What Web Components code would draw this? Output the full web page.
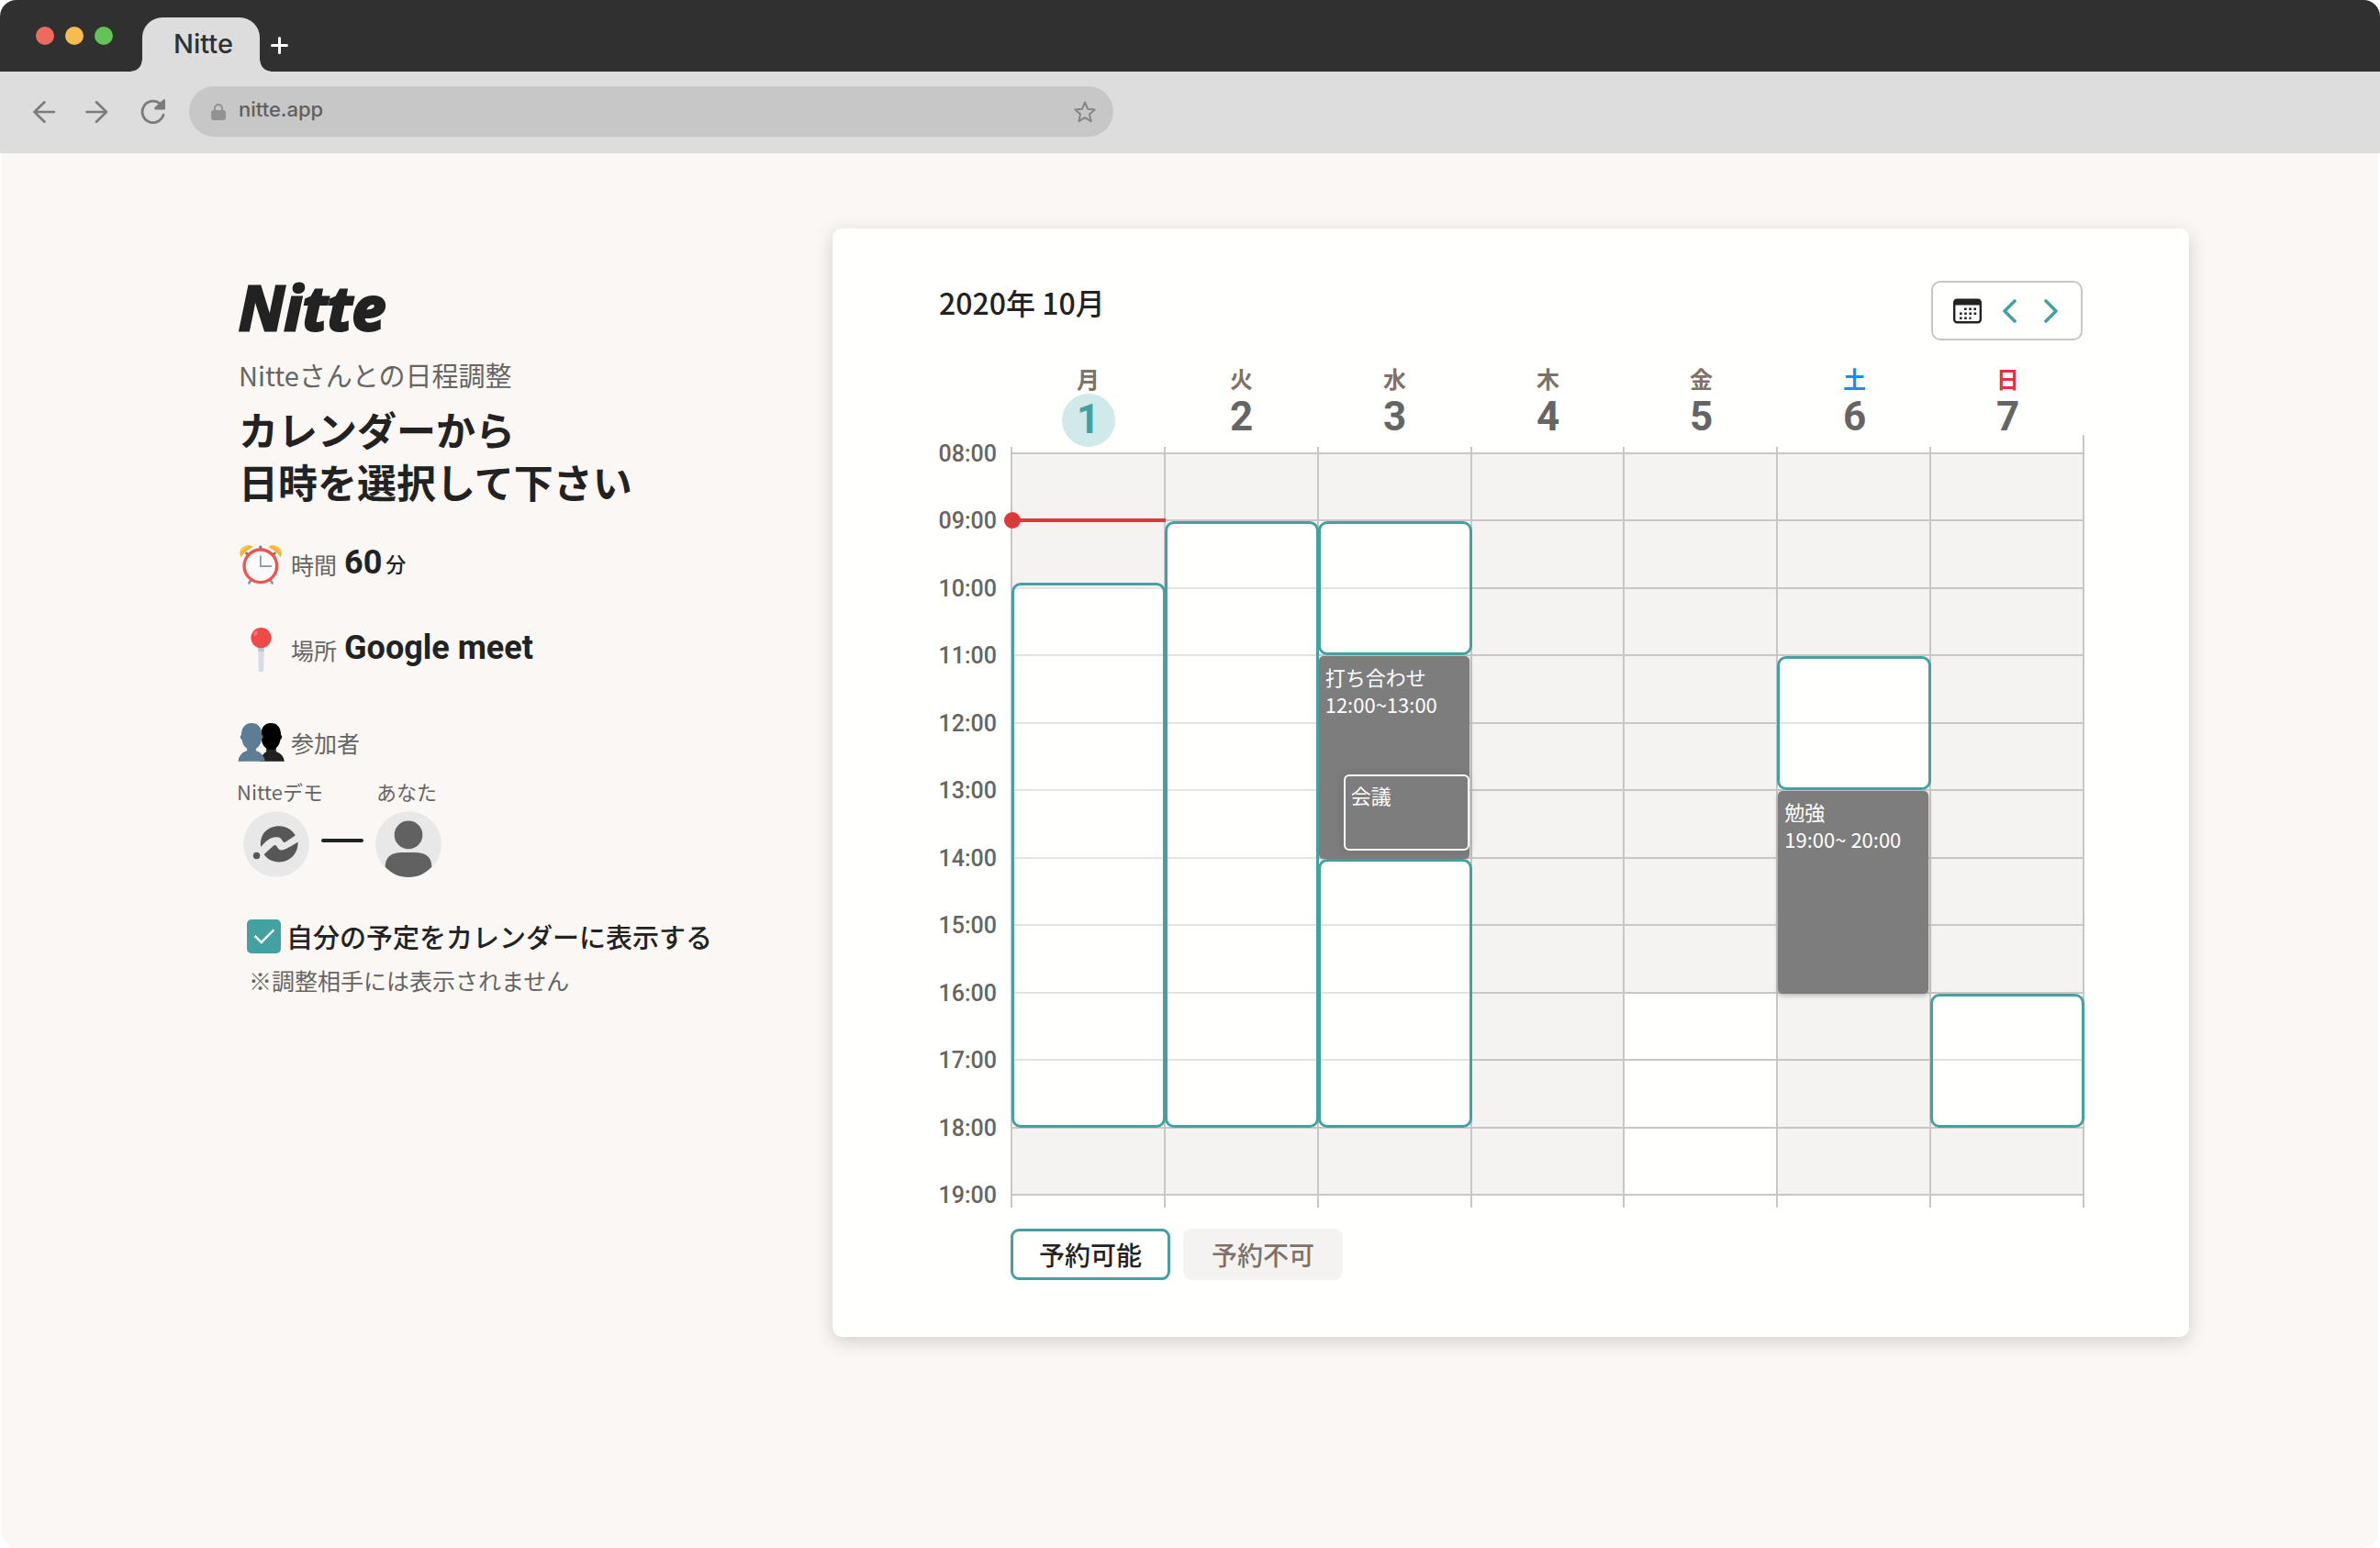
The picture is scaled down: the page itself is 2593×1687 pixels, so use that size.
<!DOCTYPE html>
<html lang="ja">
<head>
<meta charset="utf-8">
<title>Nitte</title>
<style>
  body {
    margin: 0;
    background: #fff;
    color: #222;
    font-family: "Noto Sans CJK JP", "Noto Sans", sans-serif;
    --teal: #44a1a1;
    --rule: #c9c7c6;
    --muted: #666563;
    --closed: #f4f3f2;
    --paper: #fffffd;
    --latin: Roboto, "Noto Sans CJK JP", sans-serif;
  }
</style>
</head>
<body>
<browser-window>
  <booking-page></booking-page>
</browser-window>

<script>
const define = (name, html, setup) => {
  const template = document.createElement('template');
  template.innerHTML = html;
  customElements.define(name, class extends HTMLElement {
    constructor() {
      super();
      this.attachShadow({ mode: 'open' }).append(template.content.cloneNode(true));
    }
    connectedCallback() {
      if (setup) setup(this, this.shadowRoot);
    }
  });
};

define('browser-window', `
  <style>
    :host { display: flex; flex-direction: column; min-height: 100vh; }
    * { box-sizing: border-box; }
    button { appearance: none; border: 0; padding: 0; background: none; font: inherit; color: inherit; display: flex; }
    .tabs { display: flex; align-items: flex-end; height: 78px; padding-left: 39px; background: #303030; border-radius: 18px 18px 0 0; }
    .lights { display: flex; gap: 12px; align-self: center; width: 116px; }
    .lights i { width: 20px; height: 20px; border-radius: 50%; }
    .tab { position: relative; width: 128px; height: 59px; padding: 0 0 2px 34px; align-items: center; background: #ddd; color: #303030;
      border-radius: 22px 22px 0 0; font: 500 29px/40px Inter, sans-serif; }
    .tab::before, .tab::after { content: ""; position: absolute; bottom: 0; width: 12px; height: 12px; }
    .tab::before { right: 100%; background: radial-gradient(circle at 0 0, transparent 11px, #ddd 12px); }
    .tab::after { left: 100%; background: radial-gradient(circle at 100% 0, transparent 11px, #ddd 12px); }
    .add { align-self: center; margin: 20px 0 0 12px; }
    .add svg { display: block; }
    .tools { display: flex; align-items: center; height: 89px; padding: 0 36px 2px; background: #ddd; }
    .nav { display: flex; gap: 32px; width: 170px; align-items: center; }
    .nav button:last-child { margin-left: 3px; }
    .url { display: flex; align-items: center; width: 1007px; height: 55px; padding: 0 19px 0 24px; border-radius: 28px; background: #c7c7c7; }
    input { flex: 1; min-width: 0; margin: 0; padding: 0 0 5px 14px; border: 0; outline: 0; background: none; color: #606060; font: 500 22px/32px Inter, sans-serif; }
    main { flex: 1; margin: 0 2px; background: #fbf7f4; border-radius: 0 0 18px 18px; }
  </style>
  <header>
    <div class="tabs">
      <div class="lights"><i style="background:#ee6a5f"></i><i style="background:#f5bd4f"></i><i style="background:#61c454"></i></div>
      <button class="tab">Nitte</button>
      <button class="add" aria-label="新しいタブ"><svg width="19" height="19" viewBox="0 0 19 19" stroke="#fff" stroke-width="3" stroke-linecap="round"><path d="M9.500 1.500v16M1.500 9.500h16"/></svg></button>
    </div>
    <div class="tools">
      <div class="nav">
        <button aria-label="戻る"><svg width="25" height="24" viewBox="0 0 25 24" fill="none" stroke="#7b7b7b" stroke-width="2.600" stroke-linecap="round" stroke-linejoin="round"><path d="M23 12H1.500M12.500 1.300L1.500 12l11 10.700"/></svg></button>
        <button aria-label="進む"><svg width="25" height="24" viewBox="0 0 25 24" fill="none" stroke="#7b7b7b" stroke-width="2.600" stroke-linecap="round" stroke-linejoin="round"><path d="M1.500 12H23M12 1.300L23 12 12 22.700"/></svg></button>
        <button aria-label="再読み込み"><svg width="28" height="27" viewBox="0 0 28 27" fill="none"><path d="M20.500 4.300A11.700 11.700 0 1 0 25 17.200" stroke="#7b7b7b" stroke-width="2.800" stroke-linecap="round"/><path d="M25 .6L16 8.600c-1.500 1.600-.8 3 1 3h8.500c1 0 1.500-.5 1.500-1.500V1.300C27 0 26-.2 25 .6z" fill="#7b7b7b"/></svg></button>
      </div>
      <div class="url">
        <svg width="16" height="18" viewBox="0 0 16 18"><rect y="7" width="16" height="11" rx="3" fill="#929292"/><path d="M4 8V5a4 4 0 0 1 8 0v3" fill="none" stroke="#929292" stroke-width="2"/></svg>
        <input type="text" value="nitte.app" aria-label="アドレス">
        <button aria-label="ブックマーク"><svg width="24" height="24" viewBox="0 0 24 24" fill="none" stroke="#858585" stroke-width="2" stroke-linejoin="round"><path d="M12 1.500l3 7.200 7.700.7-5.800 5 1.800 7.800L12 18.200l-6.700 4 1.800-7.800-5.800-5 7.700-.7z"/></svg></button>
      </div>
    </div>
  </header>
  <main><slot></slot></main>
`);

define('booking-page', `
  <style>
    :host { display: grid; grid-template-columns: 650px minmax(0, 1fr); align-items: start; padding: 82px 206px 0 255px; }
  </style>
  <booking-summary></booking-summary>
  <week-calendar></week-calendar>
`);

define('booking-summary', `
  <style>
    :host { display: block; padding-top: 52px; }
    .logo { margin: 0 0 0 3px; font: italic 700 66px/66px "Open Sans", sans-serif; -webkit-text-stroke: 3px #222; paint-order: stroke; stroke-linejoin: round; }
    .sub { margin: 21px 0 11px 3px; font-size: 29px; line-height: 40px; color: var(--muted); }
    h1 { margin: 0 0 37px 3px; font-weight: 700; font-size: 43px; line-height: 57px; }
    .people { display: flex; align-items: flex-end; margin-top: 14px; }
    .link { width: 46px; height: 4px; margin: 0 13px 38px; border-radius: 2px; background: #222; }
    label { display: flex; align-items: center; gap: 6px; margin: 46px 0 0 12px; font-weight: 500; font-size: 29px; line-height: 37px; }
    input { appearance: none; display: grid; place-items: center; width: 37px; height: 37px; margin: 0; border-radius: 5px; background: var(--teal); }
    input::before { content: ""; width: 9px; height: 18px; margin-top: -6px; border: solid #fff; border-width: 0 3px 3px 0; border-radius: 1px; transform: rotate(45deg); }
    .note { margin: 14px 0 0 14px; font-size: 25px; line-height: 30px; color: var(--muted); }
    .gap-m { margin-top: 43px; }
    .gap-l { margin-top: 51px; }
  </style>
  <p class="logo">Nitte</p>
  <p class="sub">Nitteさんとの日程調整</p>
  <h1>カレンダーから<br>日時を選択して下さい</h1>
  <info-row label="時間">
    <svg slot="icon" width="46" height="43" viewBox="65 68 137 128">
      <path d="M103 180l-7 11M164 180l7 11" stroke="#7d97a5" stroke-width="8" stroke-linecap="round"/>
      <path d="M88 95l10 8M179 95l-10 8M133 74v10" stroke="#5d7c8c" stroke-width="9" stroke-linecap="round"/>
      <path d="M69 108Q60 86 77 74 94 63 108 75 83 88 69 108z" fill="#fbb330"/>
      <path d="M198 108Q207 86 190 74 173 63 159 75 184 88 198 108z" fill="#fbb330"/>
      <path d="M71 90q5-14 20-17M180 74q12 4 16 16" stroke="#fcd36b" stroke-width="3" fill="none"/>
      <circle cx="133" cy="136" r="53" fill="#fafafa" stroke="#f0544f" stroke-width="10"/>
      <path d="M133 102v35h36" fill="none" stroke="#7d97a5" stroke-width="5"/>
    </svg>
    60<small>分</small>
  </info-row>
  <info-row class="gap-m" label="場所">
    <svg slot="icon" width="23" height="49" viewBox="104 342 68 146">
      <path d="M128 400h20l-2 82q-8 10-16 0z" fill="#d5dde3"/><path d="M128 405h20v14h-20z" fill="#b9c8d1"/>
      <circle cx="138" cy="375" r="33" fill="#ef4a45"/><ellipse cx="120" cy="360" rx="6" ry="9" transform="rotate(35 120 360)" fill="#f0718a"/>
    </svg>
    Google meet
  </info-row>
  <info-row class="gap-l" label="参加者">
    <svg slot="icon" width="51" height="42" viewBox="59 654 152 126">
      <path d="M130 779q10-26 22-31v-18h32v17q24 8 27 32z" fill="#212121"/>
      <path d="M167 654c21 0 32 14 33 40 5 2 4 12-2 14-3 20-15 33-31 33s-28-13-31-33c-6-2-7-12-2-14 1-26 12-40 33-40z"/>
      <path d="M60 779q2-26 29-35v-16h29v16q26 9 30 35z" fill="#5c7d93"/>
      <path d="M104 654c21 0 33 14 34 40 5 2 4 12-2 14-3 20-15 33-32 33s-29-13-32-33c-6-2-7-12-2-14 1-26 13-40 34-40z" fill="#5c7d93"/>
    </svg>
  </info-row>
  <div class="people">
    <guest-avatar name="Nitteデモ" style="--indent: 8px">
      <svg width="72" height="72" viewBox="70 131 203 217" preserveAspectRatio="none">
        <ellipse cx="171.500" cy="239.500" rx="101" ry="108" fill="#e8e8e8"/>
        <g fill="#575757"><path d="M124 248C119 206 146 180 180 180c23 0 42 13 50 31l-33 23c-8-3-8-19-25-18-22 1-34 16-48 32z"/>
        <path d="M134 273l27-27c14-12 12 14 26 13 13-1 34-15 51-27 1 38-24 66-58 66-20 0-37-9-46-25z"/><ellipse cx="111" cy="277" rx="10.500" ry="11.500"/></g>
      </svg>
    </guest-avatar>
    <span class="link"></span>
    <guest-avatar name="あなた" style="--name-indent: 1px">
      <svg width="72" height="72" viewBox="473 131 202 217" preserveAspectRatio="none">
        <ellipse cx="574" cy="239.500" rx="101" ry="108" fill="#e8e8e8"/>
        <g fill="#616161"><ellipse cx="574" cy="209" rx="43" ry="46"/><path d="M503 314c0-33 20-47 50-47h42c30 0 50 14 50 47-19 22-43 34-71 34s-52-12-71-34z"/></g>
      </svg>
    </guest-avatar>
  </div>
  <label><input type="checkbox" checked>自分の予定をカレンダーに表示する</label>
  <p class="note">※調整相手には表示されません</p>
`);

define('info-row', `
  <style>
    :host { display: flex; align-items: center; height: 50px; }
    .icon { display: flex; justify-content: center; width: 54px; margin-right: 6px; }
    .label { font-size: 25px; line-height: 36px; color: var(--muted); }
    .value { display: flex; align-items: center; gap: 4px; padding: 0 0 5px 8px; font: 700 36px/42px var(--latin); }
    ::slotted(small) { font: 500 22px/32px "Noto Sans CJK JP", sans-serif; }
  </style>
  <span class="icon"><slot name="icon"></slot></span><span class="label"></span><span class="value"><slot></slot></span>
`, (host, root) => { root.querySelector('.label').textContent = host.getAttribute('label'); });

define('guest-avatar', `
  <style>
    :host { display: flex; flex-direction: column; width: 80px; gap: 8px; }
    span { padding-left: var(--name-indent, 1px); font-size: 22px; line-height: 28px; color: var(--muted); white-space: nowrap; }
    div { display: flex; padding-left: var(--indent, 0); }
  </style>
  <span></span><div><slot></slot></div>
`, (host, root) => { root.querySelector('span').textContent = host.getAttribute('name'); });

define('free-slot', `
  <style>
    :host { box-sizing: border-box; margin: 2px -2px -1px 1px; border: 3px solid var(--teal); border-radius: 10px; background: rgba(255, 255, 253, .5); z-index: 1; }
    :host([early]) { margin-top: -5px; }
  </style>
`);

define('busy-event', `
  <style>
    :host { box-sizing: border-box; display: flex; flex-direction: column; margin: 2px 1px -2px 2px; padding: 7px 0 9px; border-radius: 5px;
      background: #7d7d7d; color: #fff; font-size: 22px; line-height: 30px; box-shadow: 0 2px 5px rgba(0, 0, 0, .25); white-space: nowrap; z-index: 1; }
    :host([nested]) { height: 83px; margin: auto 0 0 27px; padding: 5px 0 0; border: 2px solid #fff; border-radius: 6px; box-shadow: 0 0 12px rgba(0, 0, 0, .12); }
    span { padding-left: 7px; }
    :host([nested]) span { padding-left: 6px; }
  </style>
  <span class="title"></span><span class="time"></span><slot></slot>
`, (host, root) => {
  root.querySelector('.title').textContent = host.getAttribute('name');
  root.querySelector('.time').textContent = host.getAttribute('time') || '';
});

define('day-heading', `
  <style>
    :host { display: flex; flex-direction: column; align-items: center; color: #7d7168; font-weight: 700; font-size: 25px; line-height: 31px; }
    :host([weekend="sat"]) { color: #1a8fe3; }
    :host([weekend="sun"]) { color: #ec2b45; }
    b { box-sizing: border-box; width: 58px; height: 48px; margin-top: 1px; text-align: center; color: #656565; font: 700 44px/50px var(--latin); }
    :host([today]) b { height: 58px; border-radius: 50%; background: #d0eaea; color: var(--teal); line-height: 56px; }
  </style>
  <span><slot></slot></span><b></b>
`, (host, root) => { root.querySelector('b').textContent = host.getAttribute('date'); });

define('week-calendar', `
  <style>
    :host { display: block; padding: 57px 114px 62px 115px; border-radius: 10px; background: var(--paper); box-shadow: 0 5px 20px rgba(0, 0, 0, .17); }
    * { box-sizing: border-box; }
    header { display: flex; justify-content: space-between; align-items: flex-start; padding: 0 2px 0 1px; }
    h2 { margin: 0; font-weight: 500; font-size: 32px; line-height: 46px; }
    .pager { display: flex; align-items: center; height: 65px; padding: 0 25px 0 22px; border: 2px solid var(--rule); border-radius: 10px; }
    .pager button { appearance: none; display: flex; padding: 0; border: 0; background: none; }
    .pager button + button { margin-left: 23px; }
    .pager button + button + button { margin-left: 30px; }
    .days { display: grid; grid-template-columns: repeat(7, minmax(0, 1fr)); height: 90px; margin-top: 26px; padding-left: 80px; }
    .grid { display: grid; grid-template-columns: 64px 15px repeat(7, minmax(0, 1fr)) 2px; grid-template-rows: 6px repeat(11, minmax(0, 1fr)) 15px; height: 829px; }
    .time { grid-column: 1; height: 30px; margin-top: -13px; text-align: right; color: var(--muted); font: 500 25px/30px var(--latin); }
    .cell { border-top: 2px solid var(--rule); background: var(--closed); }
    .cell.open { background: var(--paper); }
    .edge { grid-column: 3 / 10; grid-row: 13; height: 2px; background: var(--rule); }
    .rule { grid-row: 1 / -1; width: 2px; background: var(--rule); }
    .rule:last-of-type { margin-top: -13px; }
    .now { position: relative; grid-column: 3; grid-row: 3; height: 4px; margin: -1px -2px 0 0; background: #dd3939; z-index: 2; }
    .now::before { content: ""; position: absolute; left: -7px; top: -7px; width: 18px; height: 18px; border-radius: 50%; background: #dd3939; }
    .legend { display: flex; gap: 14px; margin: 23px 0 0 79px; }
    .legend span { width: 174px; height: 56px; border: 3px solid var(--teal); border-radius: 9px; text-align: center; font-weight: 500; font-size: 28px; line-height: 50px; }
    .legend .no { border-color: var(--closed); background: var(--closed); color: #7d7168; }
  </style>
  <header>
    <h2>2020年 10月</h2>
    <div class="pager">
      <button aria-label="カレンダー"><svg width="31" height="28" viewBox="0 0 31 28"><rect x="1.200" y="1.700" width="28.600" height="24.600" rx="3" fill="#fff" stroke="#222" stroke-width="2.400"/><path d="M1 7.500V4Q1 1 4 1h23q3 0 3 3v3.500z" fill="#222"/><path d="M12 11.800h14M7 16.800h19M7 21.800h12.500" stroke="#222" stroke-width="2.600" stroke-dasharray="2.600 2.600"/></svg></button>
      <button aria-label="前の週"><svg width="15" height="26" viewBox="0 0 15 26" fill="none" stroke="#44a1a1" stroke-width="3.600" stroke-linecap="round" stroke-linejoin="round"><path d="M13 2L2 13l11 11"/></svg></button>
      <button aria-label="次の週"><svg width="15" height="26" viewBox="0 0 15 26" fill="none" stroke="#44a1a1" stroke-width="3.600" stroke-linecap="round" stroke-linejoin="round"><path d="M2 2l11 11L2 24"/></svg></button>
    </div>
  </header>
  <div class="days">
    <day-heading date="1" today>月</day-heading>
    <day-heading date="2">火</day-heading>
    <day-heading date="3">水</day-heading>
    <day-heading date="4">木</day-heading>
    <day-heading date="5">金</day-heading>
    <day-heading date="6" weekend="sat">土</day-heading>
    <day-heading date="7" weekend="sun">日</day-heading>
  </div>
  <div class="grid">
    <busy-event style="grid-area: 5 / 5 / 8" name="打ち合わせ" time="12:00~13:00"><busy-event nested name="会議"></busy-event></busy-event>
    <busy-event style="grid-area: 7 / 8 / 10" name="勉強" time="19:00~ 20:00"></busy-event>
    <free-slot early style="grid-area: 4 / 3 / 12"></free-slot>
    <free-slot style="grid-area: 3 / 4 / 12"></free-slot>
    <free-slot style="grid-area: 3 / 5 / 5"></free-slot>
    <free-slot style="grid-area: 8 / 5 / 12"></free-slot>
    <free-slot style="grid-area: 5 / 8 / 7"></free-slot>
    <free-slot style="grid-area: 10 / 9 / 12"></free-slot>
    <i class="now"></i>
  </div>
  <div class="legend"><span>予約可能</span><span class="no">予約不可</span></div>
`, (host, root) => {
  const grid = root.querySelector('.grid');
  const firstHour = 8;
  const lastHour = 19;
  // Open hours of each day, Monday first, as [from, to) pairs.
  const open = [[[10, 18]], [[9, 18]], [[9, 11], [14, 18]], [], [[16, 19]], [[11, 13]], [[16, 18]]];
  const backdrop = document.createDocumentFragment();
  const add = (className, row, column) => {
    const item = document.createElement('div');
    item.className = className;
    if (row) item.style.gridRow = row;
    if (column) item.style.gridColumn = column;
    backdrop.append(item);
    return item;
  };
  for (let hour = firstHour; hour <= lastHour; hour++) {
    const row = hour - firstHour + 2;
    add('time', row).textContent = String(hour).padStart(2, '0') + ':00';
    if (hour === lastHour) break;
    open.forEach((ranges, day) => {
      const isOpen = ranges.some(([from, to]) => hour >= from && hour < to);
      add(isOpen ? 'cell open' : 'cell', row, day + 3);
    });
  }
  add('edge');
  for (let column = 3; column <= 10; column++) add('rule', null, column);
  grid.prepend(backdrop);
});
</script>
</body>
</html>
